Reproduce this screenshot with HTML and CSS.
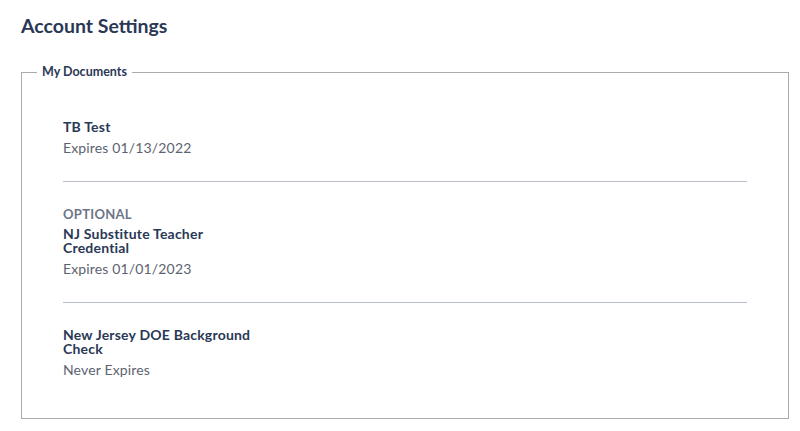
FILE: index.html
```html
<!DOCTYPE html>
<html lang="en">
<head>
<meta charset="utf-8">
<title>Account Settings</title>
<link rel="stylesheet" href="styles.css">
</head>
<body>
<main class="page">
  <h1 class="page-title">Account Settings</h1>
  <fieldset class="docs">
    <legend class="docs-legend">My Documents</legend>
    <div class="doc">
      <div class="doc-name">TB Test</div>
      <div class="doc-expiry">Expires 01/13/2022</div>
    </div>
    <div class="doc">
      <div class="doc-tag">OPTIONAL</div>
      <div class="doc-name">NJ Substitute Teacher Credential</div>
      <div class="doc-expiry">Expires 01/01/2023</div>
    </div>
    <div class="doc">
      <div class="doc-name">New Jersey DOE Background Check</div>
      <div class="doc-expiry">Never Expires</div>
    </div>
  </fieldset>
</main>
</body>
</html>
```

FILE: styles.css
```css
html, body {
  margin: 0;
  padding: 0;
  background: #ffffff;
}
body {
  font-family: "Lato", "Open Sans", "Liberation Sans", sans-serif;
  color: #2a3856;
}
.page {
  padding: 14px 11px 0 21px;
}
.page-title {
  margin: 0;
  font-size: 19.5px;
  line-height: 24px;
  font-weight: 700;
  color: #2a3856;
}
.docs {
  margin: 27px 0 0 0;
  padding: 0 41px 15px 41px;
  border: 1px solid #ababab;
  min-width: 0;
}
.docs-legend {
  margin-left: -26px;
  padding: 0 5px;
  font-size: 12.5px;
  line-height: 14px;
  font-weight: 700;
  color: #2a3856;
}
.doc {
  padding: 25px 0 23px 0;
}
.doc:first-of-type {
  padding-top: 41px;
}
.doc + .doc {
  border-top: 1px solid #b8bfca;
}
.doc-tag {
  font-size: 13px;
  line-height: 14px;
  font-weight: 700;
  color: #6c7587;
  letter-spacing: 0.3px;
  margin-bottom: 6px;
}
.doc-name {
  max-width: 190px;
  font-size: 14px;
  line-height: 14px;
  font-weight: 700;
  letter-spacing: 0.2px;
  color: #2a3856;
}
.doc-expiry {
  margin-top: 4px;
  font-size: 14px;
  line-height: 20px;
  letter-spacing: 0.15px;
  color: #5c6370;
}
```
